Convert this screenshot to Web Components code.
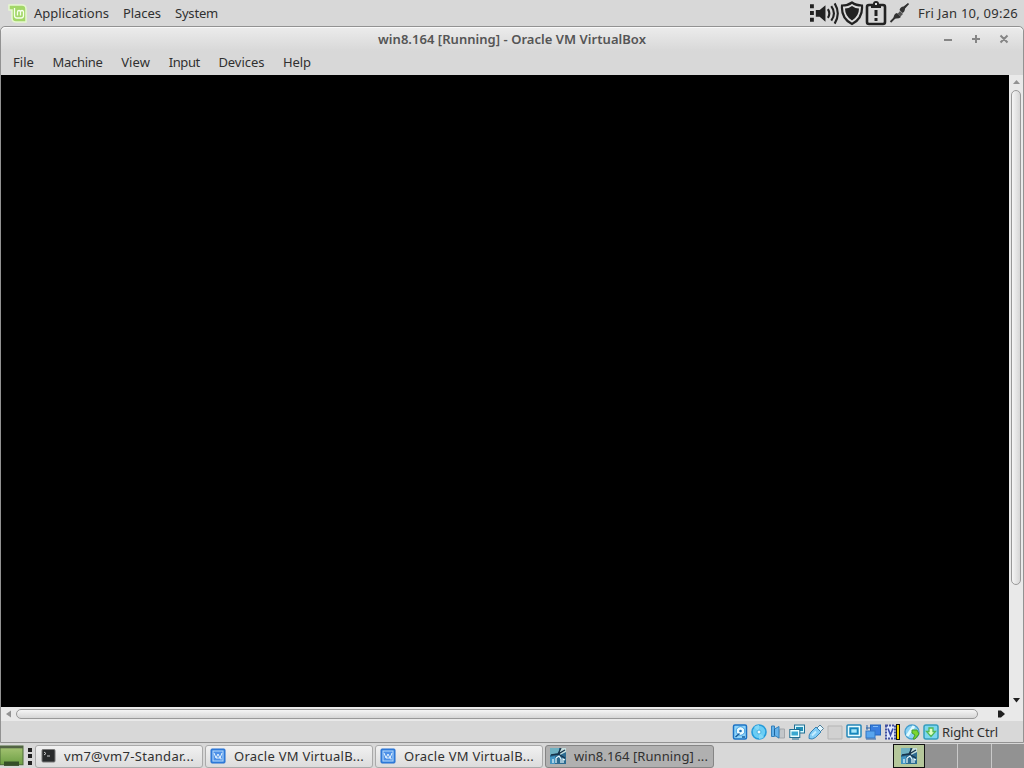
<!DOCTYPE html>
<html lang="en">
<head>
<meta charset="utf-8">
<title>Desktop</title>
<style>
  body {
    margin: 0;
    width: 1024px;
    height: 768px;
    overflow: hidden;
    background: #d6d6d6;
    color: #303030;
    font: 13px/18px "Noto Sans", "Open Sans", sans-serif;
  }
</style>
</head>
<body>
<desktop-shell></desktop-shell>
<script>
const icons = {
  mint: `<svg viewBox="0 0 19 19"><path d="M1 1h13q4 0 4 4v13H8q-4 0-4-4V6H1z" fill="#a3d768" stroke="#e6f7d0" stroke-width="1.500"/><path d="M6.500 4v7.500q0 2.500 2.500 2.500h4q2.500 0 2.500-2.500V8q0-1.500-1.500-1.500T12.500 8v3.500M12.500 8q0-1.500-1.500-1.500T9.500 8v3.500" fill="none" stroke="#f6ffec" stroke-width="1.300"/></svg>`,
  volume: `<svg viewBox="0 0 30 26"><path d="M0 4h4v4H0zM0 11h4v4H0zM0 18h4v4H0zM6 10h4l6-5v17l-6-5H6z" fill="#222"/><path d="M18.500 9q3 4.500 0 9M22 6q5.500 7.500 0 15M25.500 3q6.500 10.500 0 21" fill="none" stroke="#222" stroke-width="2.200"/></svg>`,
  shield: `<svg viewBox="0 0 24 26"><path d="M12 2.500q4 3 10 3 1 13-10 18.500Q1 18.500 2 5.500q6 0 10-3z" fill="#ddd" stroke="#222" stroke-width="2.200"/><path d="M12 6q3.500 2.500 7 2.500 0 7.500-7 12-7-4.500-7-12 3.500 0 7-2.500z" fill="#222"/></svg>`,
  clipboard: `<svg viewBox="0 0 22 26"><rect x="2" y="5" width="18" height="19" rx="2" fill="none" stroke="#222" stroke-width="2.600"/><path d="M6 4h2q0-3 3-3t3 3h2v4H6z" fill="#222"/><path d="M10 3h2v2h-2z" fill="#ddd"/><path d="M9.500 10h3v6h-3zM9.500 18h3v3h-3z" fill="#222"/></svg>`,
  plug: `<svg viewBox="0 0 22 26"><path d="M2 22l5-5M15 9l5-5.500" stroke="#333" stroke-width="1.800"/><path d="M5 18q.5-4.500 3.500-5l4 4q-3 2.500-7.500 1zM11 10q1-3.500 4-3.500l4-3-2.500 4.500q0 4-2.500 5z" fill="#333"/><path d="M9 14l2.500-3 3 3-2.500 2.500z" fill="#555"/></svg>`,
  disk: `<svg viewBox="0 0 16 16"><rect x="1.500" y="1" width="13" height="14" rx="1.500" fill="#8ed4fa" stroke="#1b72c4" stroke-width="1.500"/><circle cx="8.500" cy="7" r="4.300" fill="#e9faff" stroke="#3c9be0"/><circle cx="8.500" cy="7" r="1.300" fill="#2070b5"/><path d="M3.500 13l4-3.500M10 13h3" stroke="#195c9c" stroke-width="1.500"/></svg>`,
  cd: `<svg viewBox="0 0 16 16"><circle cx="8" cy="8" r="7" fill="#6bcdf4" stroke="#259bda" stroke-width="1.600"/><path d="M8 8L3 3q3-2 5-2zM8 8l5 5q-2 2-5 2z" fill="#83d8f7"/><circle cx="8" cy="8" r="2" fill="#effcff" stroke="#49afdd"/></svg>`,
  audio: `<svg viewBox="0 0 16 16"><path d="M10 5h4.500v9H8z" fill="#c2c6c9" stroke="#a5a8ac"/><path d="M1.500 2h3v3l4.500-2.500v11.500l-4.500-2.500v1h-3z" fill="#65b2ea" stroke="#3280bc"/><path d="M4.500 5v6.500" stroke="#1d659d"/></svg>`,
  network: `<svg viewBox="0 0 16 16"><rect x="5.500" y="1" width="10" height="8" fill="#d8f9ff" stroke="#206e93"/><path d="M7 3h7v4H7z" fill="#218fb7"/><rect x=".8" y="5.500" width="10" height="8" fill="#e7ffff" stroke="#206e93"/><path d="M2.500 7.500H9v4H2.500z" fill="#38a8d0"/><path d="M3 15h7" stroke="#206e93"/></svg>`,
  usb: `<svg viewBox="0 0 16 16"><path d="M9 4l3-3 3.500 3.500-3 3z" fill="#e4f7ff" stroke="#537f98"/><path d="M8 3L13 8l-5.500 5.500Q4 16 1 14.500q-.5-4 2-6.500z" fill="#83cdf6" stroke="#3983b5"/><path d="M4 11.500l4-4" stroke="#c5edff" stroke-width="2"/></svg>`,
  folder: `<svg viewBox="0 0 16 16"><path d="M1 2h14v13H1z" fill="#d1d1d1" stroke="#b5b5b5"/></svg>`,
  display: `<svg viewBox="0 0 16 16"><rect x="1" y="1" width="14" height="12" rx="1" fill="#e8fdff" stroke="#2385b8" stroke-width="1.500"/><rect x="4.300" y="4.300" width="7.400" height="5.400" fill="#a7e8fb" stroke="#1686bd" stroke-width="2"/><path d="M4 14.700h8" stroke="#f6ffff" stroke-width="1.500"/></svg>`,
  recording: `<svg viewBox="0 0 16 16"><rect x="5.500" y="1" width="10" height="10" fill="#397ee0" stroke="#2467bd"/><path d="M8 2.500h5" stroke="#83bdf5"/><rect x="1" y="7" width="9" height="7" fill="#58a5ee" stroke="#3274c4"/><path d="M1 15h10M2 1v5M1 4h4" stroke="#2863a6"/></svg>`,
  cpu: `<svg viewBox="0 0 12 16"><rect x="1.500" y="1.500" width="9" height="13" fill="#e0e8ff" stroke="#4251a0" stroke-width="2" stroke-dasharray="2 1"/><path d="M3.500 4.500L6 11l2.500-6.500" fill="none" stroke="#384ba8" stroke-width="1.600"/></svg>`,
  mouse: `<svg viewBox="0 0 16 16"><circle cx="8" cy="8" r="7" fill="#8bd2f3" stroke="#459ece" stroke-width="1.300"/><path d="M3 12L10 2" stroke="#e0fbff" stroke-width="3"/><path d="M8 6h5l2 4-4 5H9l2-4-3-2z" fill="#7bd631" stroke="#439b30"/></svg>`,
  keyboard: `<svg viewBox="0 0 16 16"><rect x="1" y="1" width="14" height="14" rx="2" fill="#7bd6ef" stroke="#359dbd" stroke-width="1.500"/><path d="M6 4h4v3.500h2.500L8 12.500 3.500 7.500H6z" fill="#dfffc1" stroke="#52b858" stroke-width="1.300"/></svg>`,
  terminal: `<svg viewBox="0 0 16 16"><rect x="2" y="1.500" width="13" height="12.500" rx="1" fill="#292b2c" stroke="#777"/><path d="M4 4l2 1.500L4 7M7 8h3" fill="none" stroke="#d0d0d0"/></svg>`,
  vbox: `<svg viewBox="0 0 16 16"><rect x="1" y="1" width="14" height="14" rx="1" fill="#3983e0" stroke="#236fd0"/><rect x="3" y="3" width="10" height="10" fill="#4d91e8" stroke="#b5d9fa"/><path d="M4 5l2 5 2-4 2 4 2-5M6 10h5v1.500" fill="none" stroke="#e5f4ff"/></svg>`,
  win8: `<svg viewBox="0 0 16 16"><rect width="16" height="16" fill="#2d6b91"/><path d="M0 0h9v5L0 7z" fill="#6fb1c2"/><path d="M10 0h6v4l-6 3z" fill="#c5dfdf"/><path d="M0 9l5-1v8H0z" fill="#4294c2"/><path d="M1 7l7-1 7-4M11 0L8 6l7 4" fill="none" stroke="#17334a" stroke-width="1.300"/><path d="M3 15v-4M6 15v-5M6 10l3-2 2 3v4M13 15v-4l2 1" fill="none" stroke="#e9faff" stroke-width="1.200"/></svg>`,
  desktop: `<svg viewBox="0 0 24 20" preserveAspectRatio="none"><defs><linearGradient id="g" x2="0" y2="1"><stop stop-color="#a7c575"/><stop offset="1" stop-color="#6c9e43"/></linearGradient></defs><path d="M0 1h23v17H0z" fill="url(#g)" stroke="#4b6a36"/><path d="M0 2h23" stroke="#526345" stroke-width="2"/><path d="M4 15h15v4H4z" fill="#354f28"/></svg>`
};

class UiIcon extends HTMLElement {
  constructor() {
    super();
    this.attachShadow({ mode: "open" });
  }

  connectedCallback() {
    const w = this.getAttribute("w") || 16;
    const h = this.getAttribute("h") || 16;
    this.shadowRoot.innerHTML = `
      <style>
        :host { display: block; flex: none; width: ${w}px; height: ${h}px; }
        svg { display: block; width: 100%; height: 100%; }
      </style>
      ${icons[this.getAttribute("name")]}
    `;
  }
}

// Text that is tracked in or out to fill an exact width
class UiLabel extends HTMLElement {
  constructor() {
    super();
    this.attachShadow({ mode: "open" });
  }

  connectedCallback() {
    const width = Number(this.getAttribute("w"));
    const text = this.getAttribute("text");
    this.shadowRoot.innerHTML = `
      <style>
        :host { display: block; flex: none; width: ${width}px; white-space: nowrap; }
      </style>
      <span>${text}</span>
    `;
    const span = this.shadowRoot.querySelector("span");
    const natural = span.getBoundingClientRect().width;
    span.style.letterSpacing = `${(width - natural) / text.length}px`;
  }
}

class TopPanel extends HTMLElement {
  constructor() {
    super();
    this.attachShadow({ mode: "open" });
    this.shadowRoot.innerHTML = `
      <style>
        :host {
          display: flex;
          align-items: center;
          justify-content: space-between;
          box-sizing: border-box;
          height: 26px;
          padding: 0 6px 0 8px;
          background: #d8d8d8;
        }
        .menus { display: flex; align-items: center; gap: 14px; }
        .menus ui-icon { margin-right: -7px; }
        .tray { display: flex; align-items: center; gap: 1px; }
        .tray ui-label { margin-left: 6px; }
      </style>
      <div class="menus">
        <ui-icon name="mint" w="19" h="19"></ui-icon>
        <ui-label text="Applications" w="75"></ui-label>
        <ui-label text="Places" w="38"></ui-label>
        <ui-label text="System" w="43"></ui-label>
      </div>
      <div class="tray">
        <ui-icon name="volume" w="29" h="26"></ui-icon>
        <ui-icon name="shield" w="24" h="26"></ui-icon>
        <ui-icon name="clipboard" w="22" h="26"></ui-icon>
        <ui-icon name="plug" w="23" h="26"></ui-icon>
        <ui-label text="Fri Jan 10, 09:26" w="100"></ui-label>
      </div>
    `;
  }
}

class ScrollBar extends HTMLElement {
  constructor() {
    super();
    this.attachShadow({ mode: "open" });
  }

  connectedCallback() {
    const vertical = this.hasAttribute("vertical");
    const arrows = vertical
      ? ["M4 9l3.500-4L11 9z", "M4 4h7L7.500 8.500z"]
      : ["M10 3.500v7L5 7z", "M2 3.500v7h3L9 7 5 3.500z"];
    this.shadowRoot.innerHTML = `
      <style>
        :host {
          display: flex;
          flex-direction: ${vertical ? "column" : "row"};
          background: #e9e9e9;
        }
        svg { flex: none; width: 13px; height: 13px; }
        .track { flex: 1; display: flex; flex-direction: inherit; }
        .thumb {
          box-sizing: border-box;
          border: 1px solid #999;
          border-radius: 5px;
          background: linear-gradient(${vertical ? "to right" : "to bottom"}, #f5f5f5, #d6d6d6);
          ${vertical ? "width: 10px; height: 495px; margin: 2px 0 0 2px" : "height: 10px; width: 962px; margin: 2px 0 0 2px"};
        }
      </style>
      <svg viewBox="0 0 13 13"><path d="${arrows[0]}" fill="#929292"/></svg>
      <div class="track"><div class="thumb"></div></div>
      <svg viewBox="0 0 13 13"><path d="${arrows[1]}" fill="#202020"/></svg>
    `;
  }
}

class VmWindow extends HTMLElement {
  constructor() {
    super();
    this.attachShadow({ mode: "open" });
    this.shadowRoot.innerHTML = `
      <style>
        :host {
          display: flex;
          flex-direction: column;
          box-sizing: border-box;
          height: 717px;
          border: 1px solid #929292;
          border-radius: 5px 5px 0 0;
          background: #d8d8d8;
        }
        header {
          display: flex;
          align-items: center;
          height: 24px;
          border-radius: 5px 5px 0 0;
          box-shadow: inset 0 1px #f9f9f9;
          background: linear-gradient(#ececec, #d8d8d8);
          color: #555;
          font-weight: 600;
        }
        header ui-label { margin-left: 377px; }
        header svg { width: 68px; height: 12px; margin-left: 295px; }
        nav { display: flex; align-items: center; gap: 18.600px; box-sizing: border-box; height: 24px; padding: 0 0 2px 12px; }
        .view { display: flex; height: 632px; }
        .screen { width: 1008px; background: #000; }
        .view scroll-bar { width: 14px; }
        .bottom { height: 14px; padding-right: 14px; background: #e9e9e9; }
        footer { display: flex; align-items: center; flex: 1; padding-left: 731px; gap: 3px; }
        .led { width: 2px; height: 14px; margin: 0 1px 0 -4px; border: 1px solid #111; background: #f1d900; }
      </style>
      <header>
        <ui-label text="win8.164 [Running] - Oracle VM VirtualBox" w="268"></ui-label>
        <svg viewBox="0 0 68 12" fill="none" stroke="#858585" stroke-width="2"><path d="M3 7h8M31 6h8M35 2v8M59.500 2.500l7 7M66.500 2.500l-7 7"/></svg>
      </header>
      <nav>
        <ui-label text="File" w="21"></ui-label>
        <ui-label text="Machine" w="50"></ui-label>
        <ui-label text="View" w="29"></ui-label>
        <ui-label text="Input" w="31"></ui-label>
        <ui-label text="Devices" w="46"></ui-label>
        <ui-label text="Help" w="28"></ui-label>
      </nav>
      <div class="view">
        <div class="screen"></div>
        <scroll-bar vertical></scroll-bar>
      </div>
      <scroll-bar class="bottom"></scroll-bar>
      <footer>
        <ui-icon name="disk"></ui-icon>
        <ui-icon name="cd"></ui-icon>
        <ui-icon name="audio"></ui-icon>
        <ui-icon name="network"></ui-icon>
        <ui-icon name="usb"></ui-icon>
        <ui-icon name="folder"></ui-icon>
        <ui-icon name="display"></ui-icon>
        <ui-icon name="recording"></ui-icon>
        <ui-icon name="cpu" w="13"></ui-icon>
        <div class="led"></div>
        <ui-icon name="mouse"></ui-icon>
        <ui-icon name="keyboard"></ui-icon>
        <ui-label text="Right Ctrl" w="56"></ui-label>
      </footer>
    `;
  }
}

class TaskButton extends HTMLElement {
  constructor() {
    super();
    this.attachShadow({ mode: "open" });
    this.shadowRoot.innerHTML = `
      <style>
        :host {
          display: flex;
          align-items: center;
          gap: 8px;
          box-sizing: border-box;
          width: 168px;
          height: 23px;
          padding-left: 4px;
          border: 1px solid #aaa;
          border-radius: 3px;
          background: linear-gradient(#f1f1f1, #dcdcdc);
        }
        :host([active]) {
          width: 169px;
          border-color: #858585;
          background: #b0b0b0;
        }
      </style>
      <slot></slot>
    `;
  }
}

class TaskBar extends HTMLElement {
  constructor() {
    super();
    this.attachShadow({ mode: "open" });
    this.shadowRoot.innerHTML = `
      <style>
        :host {
          display: flex;
          align-items: center;
          height: 24px;
          background: #d8d8d8;
        }
        .handle { flex: none; width: 4px; height: 17px; margin: 0 3px 0 4px; background: repeating-linear-gradient(#222 0 4px, transparent 4px 6.500px); }
        .tasks { display: flex; flex: none; gap: 2px; width: 858px; }
        .workspaces { display: flex; flex: 1; height: 24px; }
        .workspaces div { box-sizing: border-box; flex: 1; background: #929292; border-right: 1px solid #c9c9c9; }
        .workspaces div:last-child { border-right: none; }
        .workspaces .current { display: flex; flex: none; align-items: center; justify-content: center; width: 32px; border: 1px solid #111; background: #b5c79b; }
      </style>
      <ui-icon name="desktop" w="24" h="22"></ui-icon>
      <div class="handle"></div>
      <div class="tasks">
        <task-button><ui-icon name="terminal"></ui-icon><ui-label text="vm7@vm7-Standar..." w="130"></ui-label></task-button>
        <task-button><ui-icon name="vbox"></ui-icon><ui-label text="Oracle VM VirtualB..." w="130"></ui-label></task-button>
        <task-button><ui-icon name="vbox"></ui-icon><ui-label text="Oracle VM VirtualB..." w="130"></ui-label></task-button>
        <task-button active><ui-icon name="win8"></ui-icon><ui-label text="win8.164 [Running] ..." w="134"></ui-label></task-button>
      </div>
      <div class="workspaces">
        <div class="current"><ui-icon name="win8"></ui-icon></div>
        <div></div><div></div><div></div>
      </div>
    `;
  }
}

class DesktopShell extends HTMLElement {
  constructor() {
    super();
    this.attachShadow({ mode: "open" });
    this.shadowRoot.innerHTML = `
      <style>
        :host { display: flex; flex-direction: column; width: 1024px; height: 768px; overflow: hidden; }
        task-bar { margin-top: 1px; }
      </style>
      <top-panel></top-panel>
      <vm-window></vm-window>
      <task-bar></task-bar>
    `;
  }
}

customElements.define("ui-icon", UiIcon);
customElements.define("ui-label", UiLabel);
customElements.define("top-panel", TopPanel);
customElements.define("scroll-bar", ScrollBar);
customElements.define("vm-window", VmWindow);
customElements.define("task-button", TaskButton);
customElements.define("task-bar", TaskBar);
customElements.define("desktop-shell", DesktopShell);
</script>
</body>
</html>
